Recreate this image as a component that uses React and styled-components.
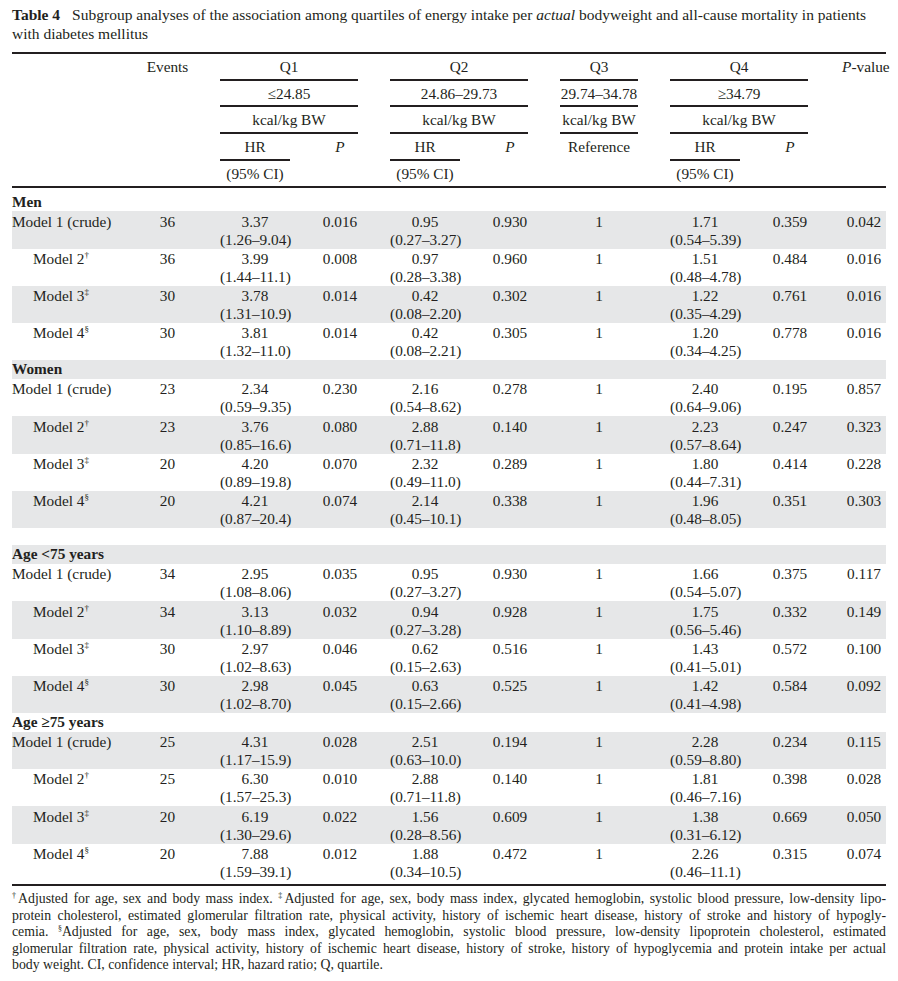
import React from 'react';
import styled, { createGlobalStyle } from 'styled-components';

const GlobalStyle = createGlobalStyle`
  body {
    margin: 0;
    background: #fff;
    color: #231f20;
    font-family: "Liberation Serif", "Times New Roman", serif;
  }
`;

const Page = styled.div`
  width: 874px;
  padding: 6px 12px 0 12px;
`;

const Title = styled.div`
  font-size: 15.5px;
  line-height: 18.5px;
  margin-bottom: 9px;
`;

const Label = styled.b`
  margin-right: 12px;
`;

const Table = styled.table`
  width: 874px;
  table-layout: fixed;
  border-collapse: separate;
  border-spacing: 0;
  padding: 0 0 3px 0;
  border-top: 2px solid #231f20;
  border-bottom: 2px solid #231f20;
  font-size: 15.3px;
`;

const HeadCell = styled.th`
  font-weight: normal;
  line-height: 18.7px;
  padding: 4px 0 2px;
  padding-left: ${(p) => (p.$p ? '32px' : '0')};
  text-align: center;
  white-space: nowrap;
  border-bottom: 2px solid ${(p) => (p.$line || p.$rule ? '#231f20' : 'transparent')};
`;

const Row = styled.tr`
  background: ${(p) => (p.$shade ? '#e6e7e8' : 'transparent')};
`;

const Section = styled.td`
  font-weight: bold;
  line-height: 18.7px;
  padding: ${(p) => (p.$first ? '5px 0 0' : '0')};
  white-space: nowrap;
`;

const Spacer = styled.td`
  height: 17px;
  padding: 0;
`;

const Cell = styled.td`
  padding: 1.3px 0 0 0;
  padding-left: ${(p) => (p.$indent ? '21px' : p.$p ? '32px' : '0')};
  line-height: 18px;
  vertical-align: top;
  text-align: ${(p) => (p.$left ? 'left' : 'center')};
  white-space: nowrap;
`;

const Sup = styled.sup`
  font-size: 9px;
  line-height: 0;
  vertical-align: 6px;
`;

const Notes = styled.div`
  margin-top: 5px;
  font-size: 13.8px;
  line-height: 16.6px;
`;

const NoteLine = styled.span`
  display: block;
  text-align: justify;
  text-align-last: ${(p) => (p.$last ? 'left' : 'justify')};
  white-space: nowrap;
`;

const NoteSup = styled.sup`
  font-size: 8px;
  line-height: 0;
  vertical-align: 5px;
`;

const widths = [128, 55, 25, 70, 68, 32, 70, 68, 32, 78, 32, 70, 68, 34, 44];

const marks = ['', '†', '‡', '§'];

const groups = [
  {
    name: 'Men',
    rows: [
      ['36', '3.37', '1.26–9.04', '0.016', '0.95', '0.27–3.27', '0.930', '1.71', '0.54–5.39', '0.359', '0.042'],
      ['36', '3.99', '1.44–11.1', '0.008', '0.97', '0.28–3.38', '0.960', '1.51', '0.48–4.78', '0.484', '0.016'],
      ['30', '3.78', '1.31–10.9', '0.014', '0.42', '0.08–2.20', '0.302', '1.22', '0.35–4.29', '0.761', '0.016'],
      ['30', '3.81', '1.32–11.0', '0.014', '0.42', '0.08–2.21', '0.305', '1.20', '0.34–4.25', '0.778', '0.016'],
    ],
  },
  {
    name: 'Women',
    rows: [
      ['23', '2.34', '0.59–9.35', '0.230', '2.16', '0.54–8.62', '0.278', '2.40', '0.64–9.06', '0.195', '0.857'],
      ['23', '3.76', '0.85–16.6', '0.080', '2.88', '0.71–11.8', '0.140', '2.23', '0.57–8.64', '0.247', '0.323'],
      ['20', '4.20', '0.89–19.8', '0.070', '2.32', '0.49–11.0', '0.289', '1.80', '0.44–7.31', '0.414', '0.228'],
      ['20', '4.21', '0.87–20.4', '0.074', '2.14', '0.45–10.1', '0.338', '1.96', '0.48–8.05', '0.351', '0.303'],
    ],
    spacer: true,
  },
  {
    name: 'Age <75 years',
    rows: [
      ['34', '2.95', '1.08–8.06', '0.035', '0.95', '0.27–3.27', '0.930', '1.66', '0.54–5.07', '0.375', '0.117'],
      ['34', '3.13', '1.10–8.89', '0.032', '0.94', '0.27–3.28', '0.928', '1.75', '0.56–5.46', '0.332', '0.149'],
      ['30', '2.97', '1.02–8.63', '0.046', '0.62', '0.15–2.63', '0.516', '1.43', '0.41–5.01', '0.572', '0.100'],
      ['30', '2.98', '1.02–8.70', '0.045', '0.63', '0.15–2.66', '0.525', '1.42', '0.41–4.98', '0.584', '0.092'],
    ],
  },
  {
    name: 'Age ≥75 years',
    rows: [
      ['25', '4.31', '1.17–15.9', '0.028', '2.51', '0.63–10.0', '0.194', '2.28', '0.59–8.80', '0.234', '0.115'],
      ['25', '6.30', '1.57–25.3', '0.010', '2.88', '0.71–11.8', '0.140', '1.81', '0.46–7.16', '0.398', '0.028'],
      ['20', '6.19', '1.30–29.6', '0.022', '1.56', '0.28–8.56', '0.609', '1.38', '0.31–6.12', '0.669', '0.050'],
      ['20', '7.88', '1.59–39.1', '0.012', '1.88', '0.34–10.5', '0.472', '2.26', '0.46–11.1', '0.315', '0.074'],
    ],
  },
];

const Gap = () => <Cell />;
const HGap = ({ rule }) => <HeadCell $rule={rule} />;

const Hr = ({ value, ci }) => (
  <Cell>
    {value}
    <br />({ci})
  </Cell>
);

const ModelRow = ({ index, data, shade }) => {
  const [ev, h1, c1, p1, h2, c2, p2, h4, c4, p4, pv] = data;
  return (
    <Row $shade={shade}>
      <Cell $left $indent={index > 0}>
        Model {index + 1}
        {index === 0 ? ' (crude)' : <Sup>{marks[index]}</Sup>}
      </Cell>
      <Cell>{ev}</Cell>
      <Gap />
      <Hr value={h1} ci={c1} />
      <Cell $p>{p1}</Cell>
      <Gap />
      <Hr value={h2} ci={c2} />
      <Cell $p>{p2}</Cell>
      <Gap />
      <Cell>1</Cell>
      <Gap />
      <Hr value={h4} ci={c4} />
      <Cell $p>{p4}</Cell>
      <Gap />
      <Cell>{pv}</Cell>
    </Row>
  );
};

const bands = [
  ['≤24.85', '24.86–29.73', '29.74–34.78', '≥34.79'],
  ['kcal/kg BW', 'kcal/kg BW', 'kcal/kg BW', 'kcal/kg BW'],
];

const Head = () => (
  <thead>
    <tr>
      <HeadCell />
      <HeadCell>Events</HeadCell>
      <HGap />
      <HeadCell colSpan={2} $line>Q1</HeadCell>
      <HGap />
      <HeadCell colSpan={2} $line>Q2</HeadCell>
      <HGap />
      <HeadCell $line>Q3</HeadCell>
      <HGap />
      <HeadCell colSpan={2} $line>Q4</HeadCell>
      <HGap />
      <HeadCell>
        <i>P</i>-value
      </HeadCell>
    </tr>
    {bands.map((band, i) => (
      <tr key={i}>
        <HeadCell />
        <HeadCell />
        <HGap />
        <HeadCell colSpan={2} $line>{band[0]}</HeadCell>
        <HGap />
        <HeadCell colSpan={2} $line>{band[1]}</HeadCell>
        <HGap />
        <HeadCell $line>{band[2]}</HeadCell>
        <HGap />
        <HeadCell colSpan={2} $line>{band[3]}</HeadCell>
        <HGap />
        <HeadCell />
      </tr>
    ))}
    <tr>
      <HeadCell />
      <HeadCell />
      <HGap />
      <HeadCell $line>HR</HeadCell>
      <HeadCell $p><i>P</i></HeadCell>
      <HGap />
      <HeadCell $line>HR</HeadCell>
      <HeadCell $p><i>P</i></HeadCell>
      <HGap />
      <HeadCell>Reference</HeadCell>
      <HGap />
      <HeadCell $line>HR</HeadCell>
      <HeadCell $p><i>P</i></HeadCell>
      <HGap />
      <HeadCell />
    </tr>
    <tr>
      <HeadCell $rule />
      <HeadCell $rule />
      <HGap rule />
      <HeadCell $rule>(95% CI)</HeadCell>
      <HeadCell $rule />
      <HGap rule />
      <HeadCell $rule>(95% CI)</HeadCell>
      <HeadCell $rule />
      <HGap rule />
      <HeadCell $rule />
      <HGap rule />
      <HeadCell $rule>(95% CI)</HeadCell>
      <HeadCell $rule />
      <HGap rule />
      <HeadCell $rule />
    </tr>
  </thead>
);

const Body = () => {
  let n = 0;
  const out = [];
  groups.forEach((g, gi) => {
    out.push(
      <Row key={`s${gi}`} $shade={n++ % 2 === 1}>
        <Section colSpan={15} $first={gi === 0}>{g.name}</Section>
      </Row>
    );
    g.rows.forEach((r, ri) => {
      out.push(<ModelRow key={`r${gi}-${ri}`} index={ri} data={r} shade={n++ % 2 === 1} />);
    });
    if (g.spacer) {
      n++;
      out.push(
        <tr key={`sp${gi}`}>
          <Spacer colSpan={15} />
        </tr>
      );
    }
  });
  return <tbody>{out}</tbody>;
};

export default function App() {
  return (
    <Page>
      <GlobalStyle />
      <Title>
        <Label>Table 4</Label>
        Subgroup analyses of the association among quartiles of energy intake per <i>actual</i> bodyweight and all-cause mortality in patients
        <br />
        with diabetes mellitus
      </Title>
      <Table>
        <colgroup>
          {widths.map((w, i) => (
            <col key={i} style={{ width: w }} />
          ))}
        </colgroup>
        <Head />
        <Body />
      </Table>
      <Notes>
        <NoteLine>
          <NoteSup>†</NoteSup>Adjusted for age, sex and body mass index. <NoteSup>‡</NoteSup>Adjusted for age, sex, body mass index, glycated hemoglobin, systolic blood pressure, low-density lipo-
        </NoteLine>
        <NoteLine>
          protein cholesterol, estimated glomerular filtration rate, physical activity, history of ischemic heart disease, history of stroke and history of hypogly-
        </NoteLine>
        <NoteLine>
          cemia. <NoteSup>§</NoteSup>Adjusted for age, sex, body mass index, glycated hemoglobin, systolic blood pressure, low-density lipoprotein cholesterol, estimated
        </NoteLine>
        <NoteLine>
          glomerular filtration rate, physical activity, history of ischemic heart disease, history of stroke, history of hypoglycemia and protein intake per actual
        </NoteLine>
        <NoteLine $last>body weight. CI, confidence interval; HR, hazard ratio; Q, quartile.</NoteLine>
      </Notes>
    </Page>
  );
}
